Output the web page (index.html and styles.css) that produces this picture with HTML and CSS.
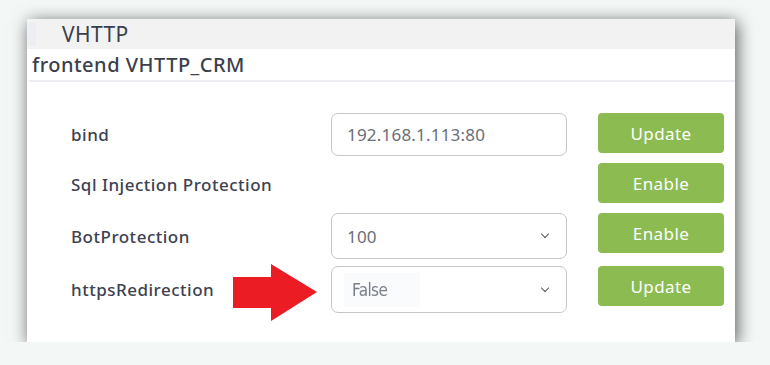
FILE: index.html
```html
<!DOCTYPE html>
<html lang="en">
  <head>
    <meta charset="utf-8" />
    <title>VHTTP</title>
    <link rel="stylesheet" href="styles.css">
  </head>
  <body>
    <div class="card">
      <header>
        <span class="grip"></span>
        <h1>VHTTP</h1>
      </header>
      <h2>frontend VHTTP_CRM</h2>

      <form class="settings">
        <div class="row">
          <label>bind</label>
          <input type="text" value="192.168.1.113:80">
          <button type="button">Update</button>
        </div>
        <div class="row">
          <label>Sql Injection Protection</label>
          <span></span>
          <button type="button">Enable</button>
        </div>
        <div class="row">
          <label>BotProtection</label>
          <div class="select"><span>100</span><i class="chev"></i></div>
          <button type="button">Enable</button>
        </div>
        <div class="row">
          <label>httpsRedirection</label>
          <div class="select tall">
            <span class="blurry">False</span><i class="chev"></i>
            <!-- annotation arrow -->
            <svg class="arrow" width="84" height="57" viewBox="0 0 84 57">
              <path d="M0 13 H38 V0 L84 28 L38 57 V44 H0 Z" fill="#ec1c24"/>
            </svg>
          </div>
          <button type="button">Update</button>
        </div>
      </form>
    </div>
  </body>
</html>
```

FILE: styles.css
```css
body {
  margin: 0;
  padding: 19px 35px 0 27px;
  background: #f3f7f6;
  font-family: 'Noto Sans', 'Open Sans', sans-serif;
  color: #3d4150;
}

.card {
  width: 708px;
  height: 323px;
  background: #fff;
  box-shadow: 2px 3px 16px rgba(0, 0, 0, 0.65);
}

header {
  height: 30px;
  background: #f2f2f2;
  display: flex;
  align-items: center;
}
header .grip { /* light strip on the left of the bar */
  width: 8px;
  height: 24px;
  margin: 0 26px 0 1px;
  background: #eceef2;
}
header h1 {
  margin: 0;
  font-size: 21px;
  font-weight: 400;
  letter-spacing: 0.4px;
  color: #3a3f4d;
}

h2 {
  margin: 0 0 0 2px;
  height: 31px;
  padding-left: 3px;
  border-bottom: 2px solid #eceef2;
  font-size: 20px;
  font-weight: 500;
  letter-spacing: 0.5px;
  line-height: 31px;
  color: #3a3f4d;
}

.settings {
  padding: 31px 0 0 44px;
  display: grid;
  row-gap: 7px;
}
.settings .row {
  display: grid;
  grid-template-columns: 229px 236px 126px;
  column-gap: 31px;
  height: 43px;
}
.settings .row:nth-child(3) {
  height: 46px;
}
.settings .row:nth-child(4) {
  height: 47px;
}
.settings label {
  align-self: center;
  font-size: 17px;
  font-weight: 500;
  letter-spacing: 0.5px;
}

.settings input, .settings .select {
  box-sizing: border-box;
  height: 100%;
  margin: 0;
  padding: 0 15px;
  border: 1px solid #c6c6c6;
  border-radius: 7px;
  font-family: inherit;
  font-size: 17px;
  letter-spacing: 0.2px;
  color: #6a6e78;
  background: #fff;
}
.settings .select {
  position: relative;
  display: flex;
  align-items: center;
  justify-content: space-between;
  padding-right: 18px;
}
.select .chev { /* small dropdown caret */
  width: 5px;
  height: 5px;
  margin-top: -4px;
  border-right: 1.6px solid #55585f;
  border-bottom: 1.6px solid #55585f;
  transform: rotate(45deg);
}
.select .blurry { /* pasted-in, low-res value */
  margin-left: -3px;
  padding: 7px 33px 7px 8px;
  background: #fafbfd;
  font-family: 'Liberation Sans Narrow', 'DejaVu Sans Condensed', sans-serif;
  font-size: 17px;
  letter-spacing: -0.6px;
  color: #7b7f8c;
  filter: blur(0.5px);
}
.select .arrow {
  position: absolute;
  left: -99px;
  top: -3px;
}

.settings button {
  height: 40px;
  border: 0;
  border-radius: 4px;
  background: #8cbb52;
  color: #fff;
  font-family: inherit;
  font-size: 17px;
  letter-spacing: 0.4px;
}
```
